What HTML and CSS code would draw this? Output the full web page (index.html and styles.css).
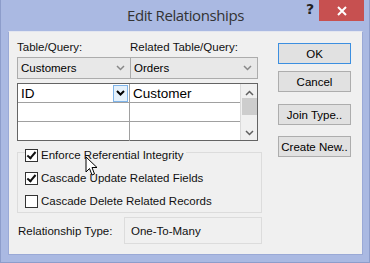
FILE: index.html
```html
<!DOCTYPE html>
<html lang="en">
<head>
    <meta charset="UTF-8">
    <title>Edit Relationships</title>
    <link rel="stylesheet" href="styles.css">
</head>
<body>
    <div class="window">
        <div class="titlebar">
            <div></div>
            <div class="title">Edit Relationships</div>
            <div class="title-buttons">
                <span class="help">?</span>
                <span class="close">
                    <svg width="12" height="10" viewBox="0 0 12 10"><path d="M2 1 L10 9 M10 1 L2 9" stroke="#fff" stroke-width="2"/></svg>
                </span>
            </div>
        </div>
        <div class="client">
            <div class="left">
                <div class="labels">
                    <div class="col">Table/Query:</div>
                    <div class="col">Related Table/Query:</div>
                </div>
                <div class="combos">
                    <div class="combo">
                        <span>Customers</span>
                        <svg class="chev" width="9" height="6" viewBox="0 0 9 6"><path d="M1 1 L4.5 4.5 L8 1" stroke="#888" stroke-width="1.5" fill="none"/></svg>
                    </div>
                    <div class="combo">
                        <span>Orders</span>
                        <svg class="chev" width="9" height="6" viewBox="0 0 9 6"><path d="M1 1 L4.5 4.5 L8 1" stroke="#888" stroke-width="1.5" fill="none"/></svg>
                    </div>
                </div>
                <div class="fields">
                    <div class="rows">
                        <div class="row">
                            <div class="cell first">ID
                                <span class="drop">
                                    <svg width="9" height="6" viewBox="0 0 9 6"><path d="M1 1 L4.5 4.5 L8 1" stroke="#000" stroke-width="2" fill="none"/></svg>
                                </span>
                            </div>
                            <div class="cell">Customer</div>
                        </div>
                        <div class="row">
                            <div class="cell first"></div>
                            <div class="cell"></div>
                        </div>
                        <div class="row">
                            <div class="cell first"></div>
                            <div class="cell"></div>
                        </div>
                    </div>
                    <div class="scrollbar">
                        <svg width="9" height="6" viewBox="0 0 9 6"><path d="M1 5 L4.5 1.5 L8 5" stroke="#606060" stroke-width="1.5" fill="none"/></svg>
                        <div class="thumb"></div>
                        <div class="track"></div>
                        <svg width="9" height="6" viewBox="0 0 9 6"><path d="M1 1 L4.5 4.5 L8 1" stroke="#606060" stroke-width="1.5" fill="none"/></svg>
                    </div>
                </div>
                <div class="options">
                    <label class="check"><span class="box checked"></span>Enforce Referential Integrity</label>
                    <label class="check"><span class="box checked"></span>Cascade Update Related Fields</label>
                    <label class="check"><span class="box"></span>Cascade Delete Related Records</label>
                </div>
                <div class="reltype">
                    <div class="rel-label">Relationship Type:</div>
                    <div class="rel-value">One-To-Many</div>
                </div>
            </div>
            <div class="right">
                <div class="button default">OK</div>
                <div class="button cancel">Cancel</div>
                <div class="button join">Join Type..</div>
                <div class="button">Create New..</div>
            </div>
            <svg class="cursor" width="14" height="21" viewBox="0 0 14 21">
                <path d="M1 1 L1 16 L4.5 12.5 L7 19 L9.5 18 L7 11.5 L12 11.5 Z" fill="#fff" stroke="#000" stroke-width="1" stroke-linejoin="round"/>
            </svg>
        </div>
    </div>
</body>
</html>
```

FILE: styles.css
```css
body {
    margin: 0;
    font-family: 'Liberation Sans', Arial, sans-serif;
    font-size: 11.5px;
    color: #000;
}
.window {
    width: 370px;
    height: 263px;
    box-sizing: border-box;
    background: #aab9e2;
    border: 1px solid #8d9dcb;
    border-top: none;
    padding: 0 6px 7px 7px;
    display: flex;
    flex-direction: column;
}
.titlebar {
    height: 31px;
    display: grid;
    grid-template-columns: 1fr auto 1fr;
    align-items: start;
}
.title {
    font-family: 'Open Sans', sans-serif;
    font-size: 15px;
    letter-spacing: -0.4px;
    color: #333;
    padding-top: 5px;
}
.title-buttons {
    display: flex;
    justify-content: flex-end;
    align-items: flex-start;
    margin-right: -1px;
}
.help {
    font-family: 'DejaVu Sans', sans-serif;
    font-weight: bold;
    font-size: 14px;
    color: #222;
    margin: 1px 5px 0 0;
}
.close {
    width: 45px;
    height: 21px;
    background: #c75050;
    display: flex;
    justify-content: center;
    align-items: center;
}
.client {
    flex: 1;
    background: #f0f0f0;
    border: 1px solid #9aa9d6;
    border-top-color: #e3e6f0;
    display: flex;
    padding: 9px 11px 0 8px;
    gap: 16px;
    position: relative;
}
.left {
    width: 245px;
    display: flex;
    flex-direction: column;
}
.labels {
    display: flex;
    width: 241px;
    height: 16px;
    color: #111;
}
.labels .col {
    width: 113px;
}
.combos {
    display: flex;
    width: 241px;
}
.combo {
    height: 20px;
    border: 1px solid #acacac;
    background: #e8e8e8;
    display: flex;
    align-items: center;
    justify-content: space-between;
    padding: 0 5px 0 3px;
}
.combo:first-child {
    flex: 0 0 104px;
}
.combo + .combo {
    border-left: none;
    flex: 0 0 118px;
}
.fields {
    margin-top: 4px;
    width: 239px;
    height: 56px;
    border: 1px solid #646464;
    background: #fff;
    display: flex;
}
.rows {
    flex: 1;
}
.row {
    display: flex;
    height: 19px;
    border-bottom: 1px solid #a0a0a0;
    box-sizing: border-box;
}
.row:last-child {
    border-bottom: none;
}
.cell {
    flex: 1;
    display: flex;
    align-items: center;
    padding-left: 3px;
    font-size: 13.5px;
    color: #000;
}
.cell.first {
    flex: 0 0 108px;
    border-right: 1px solid #a0a0a0;
    justify-content: space-between;
}
.drop {
    width: 15px;
    height: 17px;
    border: 1px solid #7eb4ea;
    background: #e5f1fb;
    display: flex;
    align-items: center;
    justify-content: center;
    margin-right: 1px;
    box-sizing: border-box;
}
.scrollbar {
    width: 17px;
    background: #f0f0f0;
    border-left: 1px solid #dadada;
    display: flex;
    flex-direction: column;
    align-items: center;
    padding: 6px 0 4px;
    box-sizing: border-box;
}
.thumb {
    width: 15px;
    height: 17px;
    background: #cdcdcd;
    margin-top: 2px;
}
.track {
    flex: 1;
}
.options {
    margin-top: 11px;
    height: 59px;
    border: 1px solid #dcdcdc;
    display: flex;
    flex-direction: column;
    align-items: flex-start;
    padding-left: 7px;
    gap: 7px;
    color: #111;
}
.check {
    display: flex;
    align-items: center;
    gap: 3px;
    height: 16px;
    padding-right: 2px;
    background: #f0f0f0;
}
.check:first-child {
    margin-top: -6px;
}
.box {
    width: 11px;
    height: 11px;
    border: 1px solid #333;
    background: #fff;
    position: relative;
}
.box.checked::after {
    content: '';
    position: absolute;
    left: 3px;
    top: 0;
    width: 3px;
    height: 7px;
    border: solid #111;
    border-width: 0 2px 2px 0;
    transform: rotate(40deg);
}
.reltype {
    margin-top: 4px;
    display: flex;
    align-items: center;
}
.rel-label {
    width: 106px;
    padding-left: 1px;
    color: #111;
}
.rel-value {
    flex: 1;
    height: 25px;
    border: 1px solid #dcdcdc;
    display: flex;
    align-items: center;
    padding-left: 6px;
    color: #111;
}
.right {
    width: 73px;
    display: flex;
    flex-direction: column;
    padding-top: 2px;
}
.button {
    height: 19px;
    border: 1px solid #adadad;
    background: #e1e1e1;
    display: flex;
    align-items: center;
    justify-content: center;
    color: #000;
}
.button.default {
    border-color: #3c8fe0;
}
.button.cancel {
    margin-top: 7px;
}
.button.join {
    margin-top: 12px;
    margin-bottom: 11px;
}
.cursor {
    position: absolute;
    left: 76px;
    top: 124px;
}
```
